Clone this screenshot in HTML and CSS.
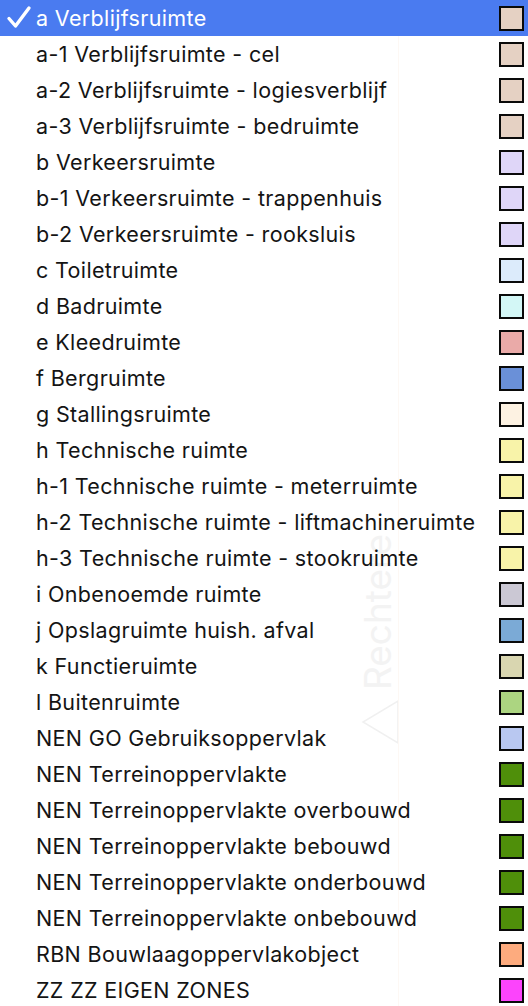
FILE: index.html
```html
<!DOCTYPE html>
<html>
<head>
<meta charset="utf-8">
<link rel="stylesheet" href="styles.css">
</head>
<body>
<div class="menu">
  <div class="watermark" aria-hidden="true">
    <span class="wm-text">Rechtere</span>
    <svg class="wm-tri" width="40" height="46" viewBox="0 0 40 46"><path d="M37 2 L37 44 L2 23 Z" fill="none" stroke="#f0f0f0" stroke-width="1.5"/></svg>
    <div class="wm-line"></div>
  </div>
  <ul class="list">
    <li class="item selected"><svg class="check" width="26" height="24" viewBox="0 0 26 24"><path d="M3 13.5 L9.5 21 L23 3" fill="none" stroke="#fff" stroke-width="3.4" stroke-linecap="round" stroke-linejoin="round"/></svg><span class="label">a Verblijfsruimte</span><span class="sw" style="background:#e5d1c3"></span></li>
    <li class="item"><span class="label">a-1 Verblijfsruimte - cel</span><span class="sw" style="background:#e5d1c3"></span></li>
    <li class="item"><span class="label">a-2 Verblijfsruimte - logiesverblijf</span><span class="sw" style="background:#e5d1c3"></span></li>
    <li class="item"><span class="label">a-3 Verblijfsruimte - bedruimte</span><span class="sw" style="background:#e5d1c3"></span></li>
    <li class="item"><span class="label">b Verkeersruimte</span><span class="sw" style="background:#dfd6f8"></span></li>
    <li class="item"><span class="label">b-1 Verkeersruimte - trappenhuis</span><span class="sw" style="background:#dfd6f8"></span></li>
    <li class="item"><span class="label">b-2 Verkeersruimte - rooksluis</span><span class="sw" style="background:#dfd6f8"></span></li>
    <li class="item"><span class="label">c Toiletruimte</span><span class="sw" style="background:#dcebfb"></span></li>
    <li class="item"><span class="label">d Badruimte</span><span class="sw" style="background:#d3f7f6"></span></li>
    <li class="item"><span class="label">e Kleedruimte</span><span class="sw" style="background:#eaaaa8"></span></li>
    <li class="item"><span class="label">f Bergruimte</span><span class="sw" style="background:#6a90d8"></span></li>
    <li class="item"><span class="label">g Stallingsruimte</span><span class="sw" style="background:#fdf2e2"></span></li>
    <li class="item"><span class="label">h Technische ruimte</span><span class="sw" style="background:#f8f3a9"></span></li>
    <li class="item"><span class="label">h-1 Technische ruimte - meterruimte</span><span class="sw" style="background:#f8f3a9"></span></li>
    <li class="item"><span class="label">h-2 Technische ruimte - liftmachineruimte</span><span class="sw" style="background:#f8f3a9"></span></li>
    <li class="item"><span class="label">h-3 Technische ruimte - stookruimte</span><span class="sw" style="background:#f8f3a9"></span></li>
    <li class="item"><span class="label">i Onbenoemde ruimte</span><span class="sw" style="background:#cbc8d4"></span></li>
    <li class="item"><span class="label">j Opslagruimte huish. afval</span><span class="sw" style="background:#7baad6"></span></li>
    <li class="item"><span class="label">k Functieruimte</span><span class="sw" style="background:#d9d6b0"></span></li>
    <li class="item"><span class="label">l Buitenruimte</span><span class="sw" style="background:#acd581"></span></li>
    <li class="item"><span class="label">NEN GO Gebruiksoppervlak</span><span class="sw" style="background:#b9c8f1"></span></li>
    <li class="item"><span class="label">NEN Terreinoppervlakte</span><span class="sw" style="background:#4f8f0a"></span></li>
    <li class="item"><span class="label">NEN Terreinoppervlakte overbouwd</span><span class="sw" style="background:#4f8f0a"></span></li>
    <li class="item"><span class="label">NEN Terreinoppervlakte bebouwd</span><span class="sw" style="background:#4f8f0a"></span></li>
    <li class="item"><span class="label">NEN Terreinoppervlakte onderbouwd</span><span class="sw" style="background:#4f8f0a"></span></li>
    <li class="item"><span class="label">NEN Terreinoppervlakte onbebouwd</span><span class="sw" style="background:#4f8f0a"></span></li>
    <li class="item"><span class="label">RBN Bouwlaagoppervlakobject</span><span class="sw" style="background:#fdab7e"></span></li>
    <li class="item"><span class="label">ZZ ZZ EIGEN ZONES</span><span class="sw" style="background:#fc44fc"></span></li>
  </ul>
</div>
</body>
</html>
```

FILE: styles.css
```css
html, body {
  margin: 0;
  padding: 0;
  background: #ffffff;
}
body {
  width: 528px;
  height: 1006px;
  overflow: hidden;
  font-family: Inter, "Noto Sans", "Liberation Sans", sans-serif;
}
.menu {
  position: relative;
  width: 528px;
  height: 1006px;
  background: #fff;
}
.watermark {
  position: absolute;
  inset: 0;
  pointer-events: none;
}
.wm-text {
  position: absolute;
  left: 360px;
  bottom: 316px;
  writing-mode: vertical-rl;
  transform: rotate(180deg);
  font-size: 37px;
  line-height: 36px;
  color: #f3f3f3;
  white-space: nowrap;
}
.wm-tri {
  position: absolute;
  left: 361px;
  top: 699px;
}
.wm-line {
  position: absolute;
  left: 398px;
  top: 0;
  width: 1px;
  height: 1006px;
  background: #fdf8f4;
}
.list {
  position: relative;
  list-style: none;
  margin: 0;
  padding: 0;
  display: flex;
  flex-direction: column;
}
.item {
  position: relative;
  height: 36px;
  display: flex;
  align-items: center;
  padding-left: 36px;
  padding-right: 4px;
  font-size: 21.5px;
  letter-spacing: 0.35px;
  color: #141414;
}
.item.selected {
  background: #4a7bf0;
  color: #fff;
}
.check {
  position: absolute;
  left: 6px;
  top: 5px;
}
.label {
  flex: 1;
  white-space: nowrap;
}
.sw {
  width: 21px;
  height: 21px;
  border: 2.5px solid #0a0a0a;
  flex: none;
}
```
